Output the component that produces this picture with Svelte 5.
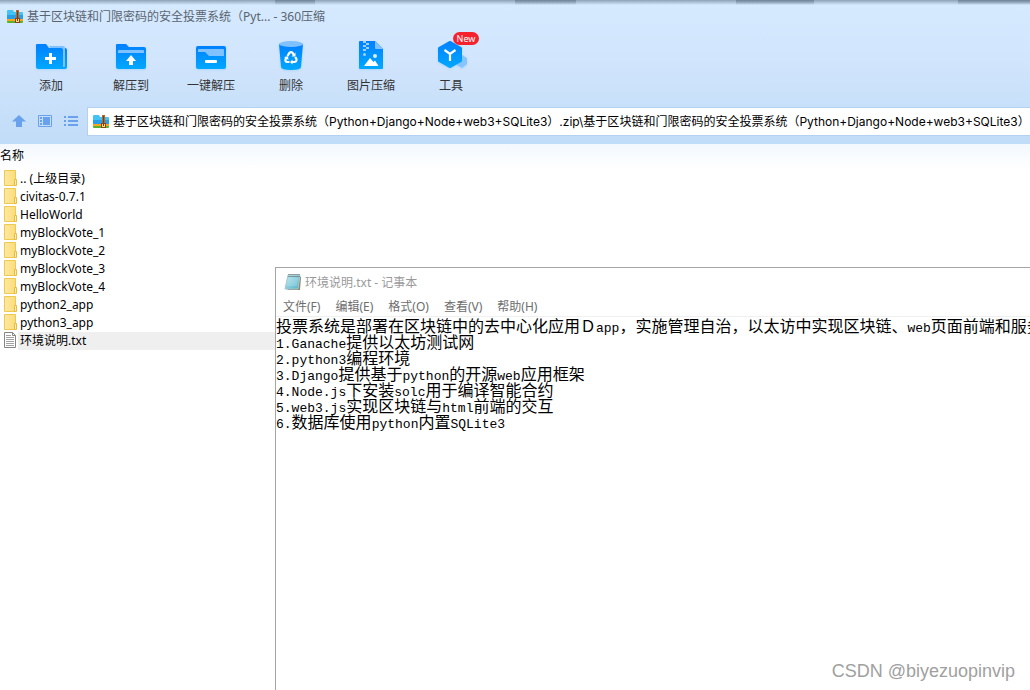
<script>
  const title = '基于区块链和门限密码的安全投票系统（Pyt... - 360压缩';
  const tools = [
    { id: 'add', label: '添加' },
    { id: 'extract', label: '解压到' },
    { id: 'oneclick', label: '一键解压' },
    { id: 'remove', label: '删除' },
    { id: 'image', label: '图片压缩' },
    { id: 'tools', label: '工具', badge: 'New' }
  ];
  const name = '基于区块链和门限密码的安全投票系统（Python+Django+Node+web3+SQLite3）';
  let path = $state(`${name}.zip\\${name}`);
  const files = [
    { name: '.. (上级目录)', folder: true },
    { name: 'civitas-0.7.1', folder: true },
    { name: 'HelloWorld', folder: true },
    { name: 'myBlockVote_1', folder: true },
    { name: 'myBlockVote_2', folder: true },
    { name: 'myBlockVote_3', folder: true },
    { name: 'myBlockVote_4', folder: true },
    { name: 'python2_app', folder: true },
    { name: 'python3_app', folder: true },
    { name: '环境说明.txt', folder: false }
  ];
  const menus = ['文件(F)', '编辑(E)', '格式(O)', '查看(V)', '帮助(H)'];
  const lines = [
    '投票系统是部署在区块链中的去中心化应用Ｄapp，实施管理自治，以太访中实现区块链、web页面前端和服务',
    '1.Ganache提供以太坊测试网',
    '2.python3编程环境',
    '3.Django提供基于python的开源web应用框架',
    '4.Node.js下安装solc用于编译智能合约',
    '5.web3.js实现区块链与html前端的交互',
    '6.数据库使用python内置SQLite3'
  ];
  // Latin runs are set in a smaller monospace so two letters fill one ideograph.
  const runs = (line) => line.match(/[\x20-\x7e]+|[^\x20-\x7e]+/g) ?? [];
  const isLatin = (run) => /^[\x20-\x7e]/.test(run);
</script>

{#snippet archiveIcon()}
  <svg class="i16" viewBox="0 0 16 16" aria-hidden="true">
    <path d="M0 2q0-1 1-1h5l1 2h8q1 0 1 1v6H0z" fill="#42c2f5" />
    <path d="M0 6h16v4H0z" fill="#289fe6" />
    <path d="M0 10h16v2H0z" fill="#f9a51b" />
    <path d="M0 12h16v1q0 1-1 1H1q-1 0-1-1z" fill="#57b22f" />
    <path d="M9 1h3v8H9z" fill="#b5682c" />
    <path d="M10 2h1v7h-1z" fill="#7c3d17" />
    <path d="M8 9h5v5H8z" fill="#8a421a" />
    <path d="M9 10h3v3H9z" fill="#ffd98a" />
    <path d="M10 10h1v2h-1z" fill="#7c3713" />
  </svg>
{/snippet}

<svg class="defs" width="0" height="0" aria-hidden="true">
  <defs>
    <linearGradient id="blue" x1="0" y1="0" x2="0" y2="1">
      <stop offset="0" stop-color="#0080ff" />
      <stop offset="1" stop-color="#00a8ff" />
    </linearGradient>
    <linearGradient id="sheet" x1="0" y1="0" x2="1" y2="0">
      <stop offset="0" stop-color="#ffe9a0" />
      <stop offset="1" stop-color="#fbdc7c" />
    </linearGradient>
    <linearGradient id="pad" x1="0" y1="0" x2="1" y2="1">
      <stop offset="0" stop-color="#c4ebf3" />
      <stop offset="1" stop-color="#4fb0c8" />
    </linearGradient>
  </defs>
</svg>

<main class="archive">
  <header>
    <div class="titlebar">
      {@render archiveIcon()}
      <h1>{title}</h1>
    </div>
    <nav class="toolbar" aria-label="工具栏">
      {#each tools as tool}
        <button type="button" class="tool">
          <span class="pic">
            <svg viewBox="0 0 40 34" aria-hidden="true">
              {#if tool.id === 'add'}
                <path d="M30 8h4q2 0 2 2v17q0 2-2 2h-4z" fill="url(#blue)" />
                <path d="M18 6h14q2 0 2 2v18q0 1-1 1h-1z" fill="#80c2ff" />
                <path d="M5 5q0-1 1-1h9l3 4h12q2 0 2 2v19H7q-2 0-2-2z" fill="url(#blue)" />
                <path d="M18 13h3v4h4v3h-4v4h-3v-4h-4v-3h4z" fill="#fff" />
              {:else if tool.id === 'extract'}
                <path d="M5 5q0-1 1-1h9l3 3h15q2 0 2 2v18q0 2-2 2H7q-2 0-2-2z" fill="url(#blue)" />
                <path d="M7 13v-2q0-1 1-1h24q1 0 1 1v2z" fill="#80c2ff" />
                <path d="M20 15l5 6h-3v4h-4v-4h-3z" fill="#fff" />
              {:else if tool.id === 'oneclick'}
                <rect x="5" y="6" width="30" height="23" rx="2" fill="url(#blue)" />
                <path d="M7 12v-2q0-1 1-1h24q1 0 1 1v6H18l-4-4z" fill="#80c2ff" />
                <rect x="14" y="20" width="12" height="3" rx="1" fill="#fff" />
              {:else if tool.id === 'remove'}
                <path d="M8 4h24l-2 23q0 3-10 3t-10-3z" fill="url(#blue)" />
                <ellipse cx="20" cy="4" rx="12" ry="3" fill="#80c2ff" />
                <g fill="none" stroke="#fff" stroke-width="2.200">
                  <path d="M16.500 16l2-3.200q1.500-1.500 3 0l1.300 2.200" />
                  <path d="M24.200 17l1.200 2q.6 2.500-2 3H21" />
                  <path d="M18.500 22H16q-2.300-.6-1.300-3l.8-1.300" />
                </g>
                <path d="M24.500 12.500v4h-4zM21.500 19.500v5l-2.500-2.500zM13 17l4-.8.5 3.800z" fill="#fff" />
              {:else if tool.id === 'image'}
                <path d="M8 2q0-1 1-1h15l8 8v19q0 1-1 1H9q-1 0-1-1z" fill="url(#blue)" />
                <path d="M24 1l8 8h-7q-1 0-1-1z" fill="#80c2ff" />
                <path d="M12 1h3v2h-3zm3 2h3v2h-3zm-3 2h3v2h-3zm3 2h3v2h-3zm-3 2h3v2h-3z" fill="#9fd1ff" />
                <circle cx="13.500" cy="14.500" r="1.500" fill="#9fd1ff" />
                <circle cx="24" cy="16" r="2" fill="#d8eeff" />
                <path d="M13 26l6-8 3.500 4 1.500-1.500 3.500 5.500z" fill="#fff" />
              {:else}
                <path d="M26 17l5-2 5 3v6l-5 4-5-3z" fill="#85c4ff" />
                <path d="M18.500 1q.5-.2 1 0l11 6.300q.5.400.500 1v12.400q0 .6-.5 1l-11 6.300q-.5.200-1 0l-11-6.300q-.5-.4-.5-1V8.300q0-.6.5-1z" fill="url(#blue)" />
                <path d="M13.500 10l5.500 4 5.500-4M19 14v7" fill="none" stroke="#fff" stroke-width="2.200" />
              {/if}
            </svg>
            {#if tool.badge}<em class="badge">{tool.badge}</em>{/if}
          </span>
          <span>{tool.label}</span>
        </button>
      {/each}
    </nav>
    <div class="pathbar">
      <button type="button" class="nav" aria-label="向上">
        <svg viewBox="0 0 16 16"><path d="M8 1l7 6.500h-4V13H5V7.500H1z" fill="#69a1ec" /></svg>
      </button>
      <button type="button" class="nav" aria-label="预览">
        <svg viewBox="0 0 16 16">
          <path d="M1.500 1.500h13v11h-13z" fill="none" stroke="#69a1ec" />
          <path d="M3 3h2v2H3zm0 3h2v2H3zm0 3h2v2H3zM6 3h7v8H6z" fill="#69a1ec" />
        </svg>
      </button>
      <button type="button" class="nav" aria-label="列表">
        <svg viewBox="0 0 16 16">
          <path d="M1 2h2v2H1zm4 0h10v2H5zM1 6h2v2H1zm4 0h10v2H5zM1 10h2v2H1zm4 0h10v2H5z" fill="#69a1ec" />
        </svg>
      </button>
      <label class="address">
        {@render archiveIcon()}
        <input type="text" aria-label="路径" bind:value={path} />
      </label>
    </div>
  </header>

  <table>
    <thead><tr><th scope="col">名称</th></tr></thead>
    <tbody>
      {#each files as file}
        <tr class:selected={!file.folder}>
          <td>
            <div class="file">
              {#if file.folder}
                <svg class="i18" viewBox="0 0 18 18" aria-hidden="true">
                  <path d="M4.500.5h11v15h-11z" fill="url(#sheet)" stroke="#efc84f" />
                  <path d="M14.500 9.500h2v6h-2z" fill="#fff0b8" stroke="#e9bd3c" />
                </svg>
              {:else}
                <svg class="i18" viewBox="0 0 18 18" aria-hidden="true">
                  <path d="M4.500.5h8l3 3v12h-11z" fill="#fff" stroke="#858585" />
                  <path d="M12.500.5v3h3" fill="none" stroke="#858585" />
                  <path d="M6 3.500h5M6 5.500h8M6 7.500h8M6 9.500h8M6 11.500h8M6 13.500h8" stroke="#a0a0a0" />
                </svg>
              {/if}
              <span>{file.name}</span>
            </div>
          </td>
        </tr>
      {/each}
    </tbody>
  </table>

  <section class="notepad" aria-label="记事本">
    <div class="note-title">
      <svg class="i18" viewBox="0 0 18 18" aria-hidden="true">
        <path d="M15 2l2 1-1 13H4l-1-1z" fill="#8f8768" />
        <path d="M4 1h12l-2 14H1z" fill="url(#pad)" stroke="#a5c9d0" />
        <path d="M4 5h10M3.500 7h10M3.200 9h10M3 11h10" stroke="#bfe6ee" stroke-width=".6" />
        <path d="M5 0v3M7 0v3M9 0v3M11 0v3M13 0v3M15 0v3" stroke="#555" stroke-dasharray="1 1" />
      </svg>
      <h2>环境说明.txt - 记事本</h2>
    </div>
    <div class="menu">
      {#each menus as menu}<button type="button">{menu}</button>{/each}
    </div>
    <div class="text" role="textbox" aria-multiline="true" aria-label="正文" tabindex="0">
      {#each lines as line}
        <p>{#each runs(line) as run}<span class:latin={isLatin(run)}>{run}</span>{/each}</p>
      {/each}
    </div>
  </section>

  <div class="watermark">CSDN @biyezuopinvip</div>
</main>

<style>
  :global(body) { margin: 0; }
  .defs { position: absolute; }
  .archive {
    position: relative;
    min-height: 100vh;
    overflow: hidden;
    background: #fff;
    color: #000;
    font: 12px/18px 'Noto Sans', 'Noto Sans CJK SC', sans-serif;
  }
  svg { display: block; flex: none; }
  .i16 { width: 16px; height: 16px; }
  .i18 { width: 18px; height: 18px; }
  button {
    padding: 0;
    border: 0;
    background: none;
    color: inherit;
    font: inherit;
  }
  header {
    padding-bottom: 8px;
    background:
      linear-gradient(#5d6f8499, #5d6f8400) 275px 0 / 40px 5px no-repeat,
      linear-gradient(#5d6f8499, #5d6f8400) 515px 0 / 61px 5px no-repeat,
      linear-gradient(#5d6f8499, #5d6f8400) 736px 0 / 78px 5px no-repeat,
      linear-gradient(#5d6f8499, #5d6f8400) 958px 0 / 100% 5px no-repeat,
      linear-gradient(#8196abdd, #8196ab00) 0 0 / 100% 5px no-repeat,
      linear-gradient(#d5eaff, #d1e5fc 60px, #c1dcf8);
  }
  .titlebar {
    display: flex;
    align-items: center;
    gap: 4px;
    height: 34px;
    padding-left: 7px;
    color: #5a6470;
  }
  h1, h2 { margin: 0; font: inherit; white-space: nowrap; }
  .toolbar { display: flex; padding: 6px 0 0 11px; height: 65px; box-sizing: border-box; }
  .tool {
    display: flex;
    flex-direction: column;
    align-items: center;
    justify-content: flex-start;
    gap: 3px;
    width: 80px;
    color: #333;
  }
  .pic { position: relative; width: 40px; height: 34px; }
  .pic svg { width: 40px; height: 34px; overflow: visible; filter: drop-shadow(0 1px 1px #5aa8f040); }
  .badge {
    position: absolute;
    left: 22px;
    top: -8px;
    width: 26px;
    height: 13px;
    border-radius: 7px;
    background: #f5222d;
    color: #fff;
    font: 9px/13px 'Noto Sans', sans-serif;
    text-align: center;
  }
  .pathbar { display: flex; align-items: center; gap: 10px; margin-top: 8px; padding-left: 11px; }
  .nav, .nav svg { width: 16px; height: 16px; }
  .address {
    display: flex;
    flex: 1;
    align-items: center;
    gap: 4px;
    min-width: 0;
    height: 27px;
    padding-left: 5px;
    border: 1px solid #b3d2f2;
    border-right: 0;
    background: #fff;
    margin-left: -2px;
  }
  .address input {
    flex: 1;
    min-width: 0;
    padding: 0;
    border: 0;
    outline: 0;
    background: none;
    font: 12px/18px Inter, 'Noto Sans CJK SC', sans-serif;
    color: #000;
  }
  table { width: 100%; border-collapse: collapse; }
  th {
    height: 26px;
    padding: 0 0 2px;
    box-sizing: border-box;
    background: linear-gradient(#f2f8fe, #fff);
    font-weight: 400;
    text-align: left;
  }
  td { padding: 0; }
  .file { display: flex; gap: 2px; height: 18px; white-space: nowrap; }
  .selected .file { background: linear-gradient(90deg, #fff 18px, #efefef 18px); }
  .notepad {
    position: absolute;
    left: 275px;
    top: 267px;
    right: 0;
    bottom: 0;
    overflow: hidden;
    border: 1px solid #a5a5a5;
    border-width: 1px 0 0 1px;
    background: #fff;
  }
  .note-title {
    display: flex;
    align-items: center;
    gap: 3px;
    height: 30px;
    padding-left: 8px;
    color: #999;
  }
  .menu {
    display: flex;
    gap: 15px;
    height: 18px;
    padding-left: 7px;
    border-bottom: 1px solid #f0f0f0;
    color: #6d6d6d;
  }
  .text {
    outline: 0;
    font: 16px/16px 'Noto Sans CJK SC', sans-serif;
  }
  .text p { display: flex; align-items: baseline; height: 16px; margin: 0; white-space: nowrap; }
  .latin { font: 13px/16px 'Liberation Mono', monospace; }
  .watermark {
    position: absolute;
    right: 15px;
    bottom: 8px;
    color: #a0a0a0;
    font: 18px/22px 'Liberation Sans', sans-serif;
  }
</style>
